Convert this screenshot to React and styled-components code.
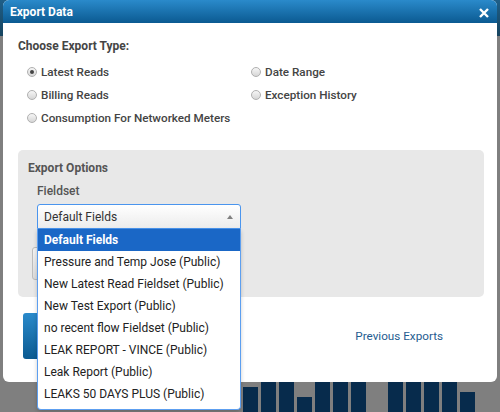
import styled, { createGlobalStyle } from 'styled-components'

const GlobalStyle = createGlobalStyle`
  html, body {
    margin: 0;
    padding: 0;
  }
  body {
    font-family: Roboto, "Liberation Sans", sans-serif;
    font-size: 12px;
  }
`

const Page = styled.div`
  position: relative;
  width: 500px;
  height: 412px;
  overflow: hidden;
  background: #7f7f7f;
`
const AppBar = styled.div`
  height: 36px;
  background: linear-gradient(#1f5f88, #16435e);
`
const Chart = styled.div`
  position: absolute;
  left: 243px;
  bottom: 0;
  display: flex;
  align-items: flex-end;
  gap: 3px;
`
const Bar = styled.div`
  width: 15px;
  height: ${p => p.h}px;
  margin-left: ${p => p.gap || 0}px;
  background: #072b4c;
`

const Modal = styled.div`
  position: absolute;
  left: 3px;
  top: 0;
  width: 494px;
  height: 382px;
  background: #fff;
  border-radius: 6px;
  display: flex;
  flex-direction: column;
`
const Header = styled.div`
  height: 23px;
  flex-shrink: 0;
  border-radius: 6px 6px 0 0;
  background: linear-gradient(#2a8acb, #0b5a91);
  display: flex;
  align-items: center;
  justify-content: space-between;
  padding: 0 8px 0 7px;
  color: #fff;
  font-weight: 700;
  font-size: 12px;
`
const Close = styled.svg`
  width: 10px;
  height: 10px;
  margin-top: 2px;
`
const Body = styled.div`
  padding: 15px 14px 0 15px;
`
const Heading = styled.div`
  line-height: 16px;
  font-weight: 700;
  color: #454545;
`
const RadioGrid = styled.div`
  display: grid;
  grid-template-columns: 224px 224px;
  grid-auto-rows: 23px;
  margin: 6px 0 0 9px;
`
const RadioRow = styled.label`
  display: flex;
  align-items: center;
  gap: 4px;
  color: #444;
  font-size: 11.7px;
  font-weight: 500;
  grid-column: ${p => p.col};
  grid-row: ${p => p.row};
`
const Dot = styled.span`
  width: 8px;
  height: 8px;
  border-radius: 50%;
  border: 1px solid #b0b0b0;
  background: linear-gradient(#f6f6f6, #d6d6d6);
  display: flex;
  align-items: center;
  justify-content: center;
  &::after {
    content: '';
    width: 4px;
    height: 4px;
    border-radius: 50%;
    background: ${p => (p.on ? '#444' : 'transparent')};
  }
`
const Panel = styled.div`
  margin-top: 21px;
  width: 466px;
  height: 147px;
  box-sizing: border-box;
  background: #e8e8e8;
  border-radius: 5px;
  padding: 10px 10px 0 10px;
`
const PanelTitle = styled.div`
  line-height: 16px;
  font-weight: 700;
  color: #555;
`
const FieldLabel = styled.div`
  line-height: 16px;
  margin: 7px 0 0 9px;
  font-weight: 500;
  color: #555;
`
const FieldArea = styled.div`
  position: relative;
  margin: 5px 0 0 9px;
`
const Select = styled.div`
  width: 204px;
  height: 25px;
  box-sizing: border-box;
  border: 1px solid #4a95ee;
  border-radius: 3px 3px 0 0;
  background: linear-gradient(#fff, #ececec);
  display: flex;
  align-items: center;
  justify-content: space-between;
  padding: 0 7px 0 6px;
  color: #333;
`
const Caret = styled.span`
  width: 0;
  height: 0;
  border-left: 3px solid transparent;
  border-right: 3px solid transparent;
  border-bottom: 4px solid #808080;
`
const EditButton = styled.div`
  margin: 18px 0 0 -5px;
  width: 120px;
  height: 33px;
  box-sizing: border-box;
  border: 1px solid #bcbcbc;
  border-radius: 3px;
  background: linear-gradient(#f4f4f4, #dcdcdc);
`
const Menu = styled.ul`
  position: absolute;
  left: 0;
  top: 25px;
  width: 204px;
  box-sizing: border-box;
  margin: 0;
  padding: 0 0 4px 0;
  list-style: none;
  background: #fff;
  border: 1px solid #5d9ff0;
  border-top: none;
  border-radius: 0 0 4px 4px;
  box-shadow: 0 2px 4px rgba(0, 0, 0, 0.2);
`
const Option = styled.li`
  height: 22px;
  display: flex;
  align-items: center;
  padding-left: 6px;
  color: ${p => (p.active ? '#fff' : '#222')};
  background: ${p => (p.active ? '#1a67c6' : 'transparent')};
  font-weight: ${p => (p.active ? 700 : 400)};
  white-space: nowrap;
`
const Footer = styled.div`
  display: flex;
  align-items: center;
  margin-top: 16px;
  padding: 0 40px 0 5px;
`
const ExportButton = styled.div`
  width: 110px;
  height: 46px;
  border-radius: 3px;
  background: linear-gradient(#2a8acb, #0b5a91);
`
const Link = styled.a`
  margin-left: auto;
  color: #1f5c90;
  font-size: 11.7px;
  text-decoration: none;
`

const options = [
  'Default Fields',
  'Pressure and Temp Jose (Public)',
  'New Latest Read Fieldset (Public)',
  'New Test Export (Public)',
  'no recent flow Fieldset (Public)',
  'LEAK REPORT - VINCE (Public)',
  'Leak Report (Public)',
  'LEAKS 50 DAYS PLUS (Public)'
]

const bars = [
  { h: 25 }, { h: 60 }, { h: 60 }, { h: 15 }, { h: 60 }, { h: 60 }, { h: 60 },
  { h: 60, gap: 19 }, { h: 60 }, { h: 60 }, { h: 60 }, { h: 20 }
]

const radios = [
  { label: 'Latest Reads', col: 1, row: 1, on: true },
  { label: 'Billing Reads', col: 1, row: 2 },
  { label: 'Consumption For Networked Meters', col: 1, row: 3 },
  { label: 'Date Range', col: 2, row: 1 },
  { label: 'Exception History', col: 2, row: 2 }
]

export default function App () {
  return (
    <Page>
      <GlobalStyle />
      <AppBar />
      <Chart>
        {bars.map((b, i) => (
          <Bar key={i} h={b.h} gap={b.gap} />
        ))}
      </Chart>
      <Modal>
        <Header>
          <span>Export Data</span>
          <Close viewBox='0 0 10 10'>
            <path d='M1 1L9 9M9 1L1 9' stroke='#fff' strokeWidth='2.4' />
          </Close>
        </Header>
        <Body>
          <Heading>Choose Export Type:</Heading>
          <RadioGrid>
            {radios.map(r => (
              <RadioRow key={r.label} col={r.col} row={r.row}>
                <Dot on={r.on} />
                {r.label}
              </RadioRow>
            ))}
          </RadioGrid>
          <Panel>
            <PanelTitle>Export Options</PanelTitle>
            <FieldLabel>Fieldset</FieldLabel>
            <FieldArea>
              <Select>
                <span>Default Fields</span>
                <Caret />
              </Select>
              <EditButton />
              <Menu>
                {options.map((o, i) => (
                  <Option key={o} active={i === 0}>{o}</Option>
                ))}
              </Menu>
            </FieldArea>
          </Panel>
          <Footer>
            <ExportButton />
            <Link href='#'>Previous Exports</Link>
          </Footer>
        </Body>
      </Modal>
    </Page>
  )
}
